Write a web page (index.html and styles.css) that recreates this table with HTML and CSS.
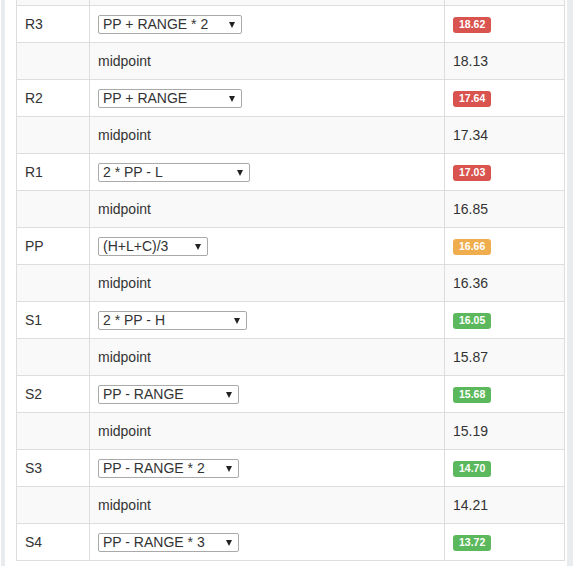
FILE: index.html
```html
<!DOCTYPE html>
<html>
<head>
<meta charset="utf-8">
<link rel="stylesheet" href="styles.css">
</head>
<body>
<div class="panel">
<table class="pivots">
<colgroup><col class="c1"><col class="c2"><col class="c3"></colgroup>
<tbody>
<tr class="striped"><td></td><td></td><td></td></tr>
<tr><td>R3</td><td><div class="select w143"><span>PP + RANGE * 2</span><span class="caret"></span></div></td><td><span class="label danger">18.62</span></td></tr>
<tr class="striped"><td></td><td>midpoint</td><td>18.13</td></tr>
<tr><td>R2</td><td><div class="select w143"><span>PP + RANGE</span><span class="caret"></span></div></td><td><span class="label danger">17.64</span></td></tr>
<tr class="striped"><td></td><td>midpoint</td><td>17.34</td></tr>
<tr><td>R1</td><td><div class="select w151"><span>2 * PP - L</span><span class="caret"></span></div></td><td><span class="label danger">17.03</span></td></tr>
<tr class="striped"><td></td><td>midpoint</td><td>16.85</td></tr>
<tr><td>PP</td><td><div class="select w109"><span>(H+L+C)/3</span><span class="caret"></span></div></td><td><span class="label warning">16.66</span></td></tr>
<tr class="striped"><td></td><td>midpoint</td><td>16.36</td></tr>
<tr><td>S1</td><td><div class="select w148"><span>2 * PP - H</span><span class="caret"></span></div></td><td><span class="label success">16.05</span></td></tr>
<tr class="striped"><td></td><td>midpoint</td><td>15.87</td></tr>
<tr><td>S2</td><td><div class="select w140"><span>PP - RANGE</span><span class="caret"></span></div></td><td><span class="label success">15.68</span></td></tr>
<tr class="striped"><td></td><td>midpoint</td><td>15.19</td></tr>
<tr><td>S3</td><td><div class="select w140"><span>PP - RANGE * 2</span><span class="caret"></span></div></td><td><span class="label success">14.70</span></td></tr>
<tr class="striped"><td></td><td>midpoint</td><td>14.21</td></tr>
<tr><td>S4</td><td><div class="select w140"><span>PP - RANGE * 3</span><span class="caret"></span></div></td><td><span class="label success">13.72</span></td></tr>
</tbody>
</table>
</div>
</body>
</html>
```
FILE: styles.css
```css
html, body {
  margin: 0;
  padding: 0;
}
body {
  background: #e9ecef;
  border-left: 1px solid #fff;
  font-family: "Liberation Sans", Arial, sans-serif;
  font-size: 14px;
  line-height: 20px;
  color: #333;
  height: 566px;
  overflow: hidden;
  box-sizing: border-box;
}
.panel {
  display: flow-root;
  margin: 0 6px 0 4px;
  background: #fff;
  padding: 0 3px 6px 11px;
  height: 566px;
  box-sizing: border-box;
  overflow: hidden;
}
.pivots {
  width: 548px;
  border-collapse: collapse;
  table-layout: fixed;
  margin-top: -32px;
}
.c1 { width: 73px; }
.c2 { width: 355px; }
.c3 { width: 120px; }
.pivots td {
  border: 1px solid #ddd;
  padding: 8px;
  height: 20px;
  vertical-align: top;
}
.pivots tr.striped td {
  background: #f9f9f9;
}
.select {
  display: flex;
  align-items: center;
  box-sizing: border-box;
  height: 19px;
  margin-top: 1px;
  border: 1px solid #a9a9a9;
  border-radius: 2px;
  padding: 0 6px 0 4px;
  background: #fff;
  color: #333;
  line-height: 17px;
}
.select span:first-child {
  flex: 1;
  white-space: nowrap;
}
.caret {
  width: 0;
  height: 0;
  border-left: 3px solid transparent;
  border-right: 3px solid transparent;
  border-top: 6px solid #222;
}
.w143 { width: 144px; }
.w151 { width: 152px; }
.w109 { width: 110px; }
.w148 { width: 149px; }
.w140 { width: 141px; }
.label {
  display: inline-block;
  margin-top: 3px;
  padding: 2px 6px 3px;
  font-size: 10.5px;
  font-weight: bold;
  line-height: 1;
  color: #fff;
  border-radius: 3px;
  vertical-align: top;
}
.danger { background: #d9534f; }
.warning { background: #f0ad4e; }
.success { background: #5cb85c; }
```
